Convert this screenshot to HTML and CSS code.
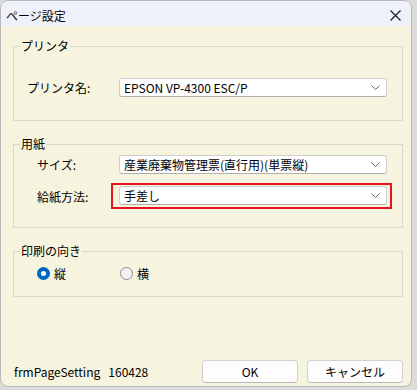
FILE: index.html
```html
<!DOCTYPE html>
<html>
<head>
<meta charset="UTF-8">
<title>ページ設定</title>
<link rel="stylesheet" href="styles.css">
</head>
<body>

<div class="window">
  <div class="titlebar">
    <span class="title">ページ設定</span>
    <svg class="close" width="11" height="11" viewBox="0 0 11 11">
      <path d="M0.5 0.5 L10.5 10.5 M10.5 0.5 L0.5 10.5" stroke="#1a1a1a" stroke-width="1.2" fill="none"/>
    </svg>
  </div>

  <div class="content">
    <fieldset class="group group-printer">
      <legend>プリンタ</legend>
      <div class="row">
        <span class="label label-wide">プリンタ名:</span>
        <div class="combo">
          <span>EPSON VP-4300 ESC/P</span>
          <svg class="chev" width="9" height="5" viewBox="0 0 9 5"><path d="M0.5 0.5 L4.5 4.5 L8.5 0.5" stroke="#606060" fill="none"/></svg>
        </div>
      </div>
    </fieldset>

    <fieldset class="group group-paper">
      <legend>用紙</legend>
      <div class="row">
        <span class="label">サイズ:</span>
        <div class="combo">
          <span>産業廃棄物管理票(直行用)(単票縦)</span>
          <svg class="chev" width="9" height="5" viewBox="0 0 9 5"><path d="M0.5 0.5 L4.5 4.5 L8.5 0.5" stroke="#606060" fill="none"/></svg>
        </div>
      </div>
      <div class="row row-feed">
        <span class="label">給紙方法:</span>
        <div class="highlight">
          <div class="combo">
            <span>手差し</span>
            <svg class="chev" width="9" height="5" viewBox="0 0 9 5"><path d="M0.5 0.5 L4.5 4.5 L8.5 0.5" stroke="#606060" fill="none"/></svg>
          </div>
        </div>
      </div>
    </fieldset>

    <fieldset class="group group-orient">
      <legend>印刷の向き</legend>
      <div class="radios">
        <label class="radio"><span class="dot checked"></span>縦</label>
        <label class="radio"><span class="dot"></span>横</label>
      </div>
    </fieldset>

    <div class="footer">
      <span class="form-id">frmPageSetting&nbsp;&nbsp;&nbsp;160428</span>
      <div class="buttons">
        <button class="btn">OK</button>
        <button class="btn">キャンセル</button>
      </div>
    </div>
  </div>
</div>

</body>
</html>
```

FILE: styles.css
```css
body {
  margin: 0;
  background: #dcdcdc;
  font-family: "Noto Sans CJK JP", "Noto Sans", sans-serif;
  font-size: 12px;
  color: #000;
}

.window {
  width: 412px;
  height: 387px;
  border: 1px solid #b8b8b8;
  border-radius: 8px;
  overflow: hidden;
  display: flex;
  flex-direction: column;
  background: #f6f4de;
  box-sizing: border-box;
}

.titlebar {
  height: 25px;
  flex: 0 0 25px;
  background: #eef1f9;
  display: flex;
  align-items: center;
  justify-content: space-between;
  padding: 0 10px 0 5px;
}
.title {
  font-size: 12px;
  margin-top: 4px;
}
.close {
  margin-top: 3px;
}

.content {
  flex: 1;
  display: flex;
  flex-direction: column;
  padding: 0 8px 0 12px;
}

/* legend sits at the fieldset's left padding, so rows get their own indent */
.group {
  margin: 0;
  padding: 0;
  border: 1px solid #d8d8d0;
}
.group legend {
  margin-left: 6px;
  padding: 0 1px;
  line-height: 16px;
}
.group-printer {
  margin-top: 12px;
  padding: 24px 0 23px 0;
}
.group-printer .row {
  margin-left: 13px;
}
.group-paper {
  margin-top: 15px;
  padding: 3px 0 18px 0;
}
.group-paper .row {
  margin-left: 23px;
}
.group-orient {
  margin-top: 15px;
  padding: 6px 0 14px 0;
}
.group-orient .radios {
  margin-left: 23px;
}

.row {
  display: flex;
  align-items: center;
}
.row-feed {
  margin-top: 9px;
}
.label {
  width: 82px;
}
.label-wide {
  width: 92px;
}

.combo {
  width: 268px;
  height: 19px;
  box-sizing: border-box;
  background: #fff;
  border: 1px solid #cfcfcf;
  border-bottom-color: #b0b0b0;
  border-radius: 3px;
  display: flex;
  align-items: center;
  justify-content: space-between;
  padding: 0 6px 0 4px;
}

.highlight {
  margin-left: -8px;
  border: 2px solid #e8141c;
  padding: 1px 3px 2px 6px;
}

.radios {
  display: flex;
  align-items: center;
}
.radio {
  display: flex;
  align-items: center;
  gap: 4px;
  width: 83px;
}
.dot {
  width: 13px;
  height: 13px;
  box-sizing: border-box;
  border-radius: 50%;
  border: 1px solid #8a8a8a;
  background: #f2f2f2;
}
.dot.checked {
  border: 4px solid #0067c0;
  background: #fff;
}

.footer {
  margin-top: auto;
  display: flex;
  align-items: center;
  justify-content: space-between;
  padding-bottom: 3px;
}
.form-id {
  margin-left: 1px;
}
.buttons {
  display: flex;
  gap: 9px;
}
.btn {
  width: 96px;
  height: 23px;
  font-family: inherit;
  font-size: 12px;
  background: #fdfdfd;
  border: 1px solid #d0d0d0;
  border-bottom-color: #b8b8b8;
  border-radius: 4px;
  padding: 0;
}
```
